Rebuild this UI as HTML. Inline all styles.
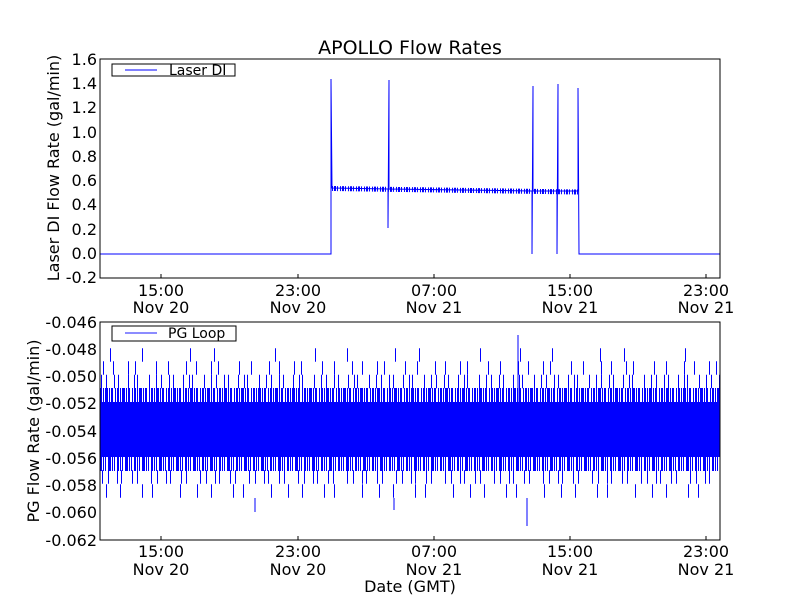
<!DOCTYPE html>
<html><head><meta charset="utf-8"><style>
html,body{margin:0;padding:0;background:#fff;}
svg{display:block;font-family:"DejaVu Sans","Liberation Sans",sans-serif;}
</style></head><body>
<svg width="800" height="600" xmlns="http://www.w3.org/2000/svg">
<rect width="800" height="600" fill="#fff"/>
<text x="410" y="54" font-size="19" text-anchor="middle">APOLLO Flow Rates</text>
<g stroke="#00f" stroke-width="1" fill="none">
<path d="M100 254 L331 254 L331 79 L332 188 L388 189 L388 228 L389 80 L389 189 L532 191 L532 254 L533 86 L533 191 L557 191 L557 254 L558 84 L558 191 L578 191 L578 88 L579 254 L720 254"/>
<line x1="332" y1="188.5" x2="578" y2="192" stroke-width="5" stroke-dasharray="1 1 2 1 1 2"/>
</g>
<rect x="100" y="59" width="620" height="219" fill="none" stroke="#000" stroke-width="1"/>
<g font-size="16" text-anchor="end">
<text x="97" y="65">1.6</text><text x="97" y="89">1.4</text><text x="97" y="113">1.2</text><text x="97" y="138">1.0</text><text x="97" y="162">0.8</text><text x="97" y="186">0.6</text><text x="97" y="210">0.4</text><text x="97" y="235">0.2</text><text x="97" y="259">0.0</text><text x="97" y="283">-0.2</text>
</g>
<text transform="translate(59,168) rotate(-90)" font-size="16" text-anchor="middle">Laser DI Flow Rate (gal/min)</text>
<g font-size="16" text-anchor="middle">
<text x="161" y="296">15:00</text><text x="161" y="313">Nov 20</text>
<text x="298" y="296">23:00</text><text x="298" y="313">Nov 20</text>
<text x="434" y="296">07:00</text><text x="434" y="313">Nov 21</text>
<text x="570" y="296">15:00</text><text x="570" y="313">Nov 21</text>
<text x="706" y="296">23:00</text><text x="706" y="313">Nov 21</text>
</g>
<rect x="112" y="64" width="123" height="12" fill="#fff" stroke="#000"/>
<line x1="125" y1="70" x2="157" y2="70" stroke="#00f"/>
<text x="169" y="75" font-size="14">Laser DI</text>

<rect x="100" y="402" width="620" height="55" fill="#00f"/>
<g stroke="#00f" fill="none">
<line x1="100" y1="395" x2="720" y2="395" stroke-width="14" stroke-dasharray="2 1 1 1 3 1 1 1 2 2 1 1"/>
<line x1="101" y1="381.5" x2="720" y2="381.5" stroke-width="13.6" stroke-dasharray="1 4 1 7 1 3 1 9 1 5 1 2 1 11 1 6"/>
<line x1="103" y1="368" x2="720" y2="368" stroke-width="13.6" stroke-dasharray="1 9 1 14 1 6 1 20 1 11 1 17"/>
<line x1="110" y1="355" x2="720" y2="355" stroke-width="13.6" stroke-dasharray="1 31 1 47 1 23 1 60 1 39"/>
<line x1="100" y1="464" x2="720" y2="464" stroke-width="14" stroke-dasharray="2 1 1 1 1 2 3 1 1 1 1 2"/>
<line x1="102" y1="477" x2="720" y2="477" stroke-width="13.6" stroke-dasharray="1 5 1 8 1 3 1 10 1 4 1 13"/>
<line x1="106" y1="491" x2="720" y2="491" stroke-width="13.6" stroke-dasharray="1 13 1 21 1 9 1 27 1 16"/>
<path d="M255 498V512M527 498V526M518 402V335M394 498V510"/>
</g>
<rect x="100" y="322" width="620" height="218" fill="none" stroke="#000" stroke-width="1"/>
<g font-size="16" text-anchor="end">
<text x="97" y="328">-0.046</text><text x="97" y="355">-0.048</text><text x="97" y="382">-0.050</text><text x="97" y="409">-0.052</text><text x="97" y="437">-0.054</text><text x="97" y="464">-0.056</text><text x="97" y="491">-0.058</text><text x="97" y="518">-0.060</text><text x="97" y="546">-0.062</text>
</g>
<text transform="translate(39,431) rotate(-90)" font-size="16" text-anchor="middle">PG Flow Rate (gal/min)</text>
<g font-size="16" text-anchor="middle">
<text x="161" y="557">15:00</text><text x="161" y="575">Nov 20</text>
<text x="298" y="557">23:00</text><text x="298" y="575">Nov 20</text>
<text x="434" y="557">07:00</text><text x="434" y="575">Nov 21</text>
<text x="570" y="557">15:00</text><text x="570" y="575">Nov 21</text>
<text x="706" y="557">23:00</text><text x="706" y="575">Nov 21</text>
<text x="410" y="592">Date (GMT)</text>
</g>
<rect x="112" y="326" width="124" height="15" fill="#fff" stroke="#000"/>
<line x1="125" y1="333" x2="157" y2="333" stroke="#00f" opacity="0.6" stroke-width="1.5"/>
<text x="168" y="338" font-size="14">PG Loop</text>
<g stroke="#000">
<line x1="161" y1="278" x2="161" y2="274"/><line x1="298" y1="278" x2="298" y2="274"/><line x1="434" y1="278" x2="434" y2="274"/><line x1="570" y1="278" x2="570" y2="274"/><line x1="706" y1="278" x2="706" y2="274"/>
<line x1="161" y1="540" x2="161" y2="536"/><line x1="298" y1="540" x2="298" y2="536"/><line x1="434" y1="540" x2="434" y2="536"/><line x1="570" y1="540" x2="570" y2="536"/><line x1="706" y1="540" x2="706" y2="536"/>
</g>
</svg>
</body></html>
